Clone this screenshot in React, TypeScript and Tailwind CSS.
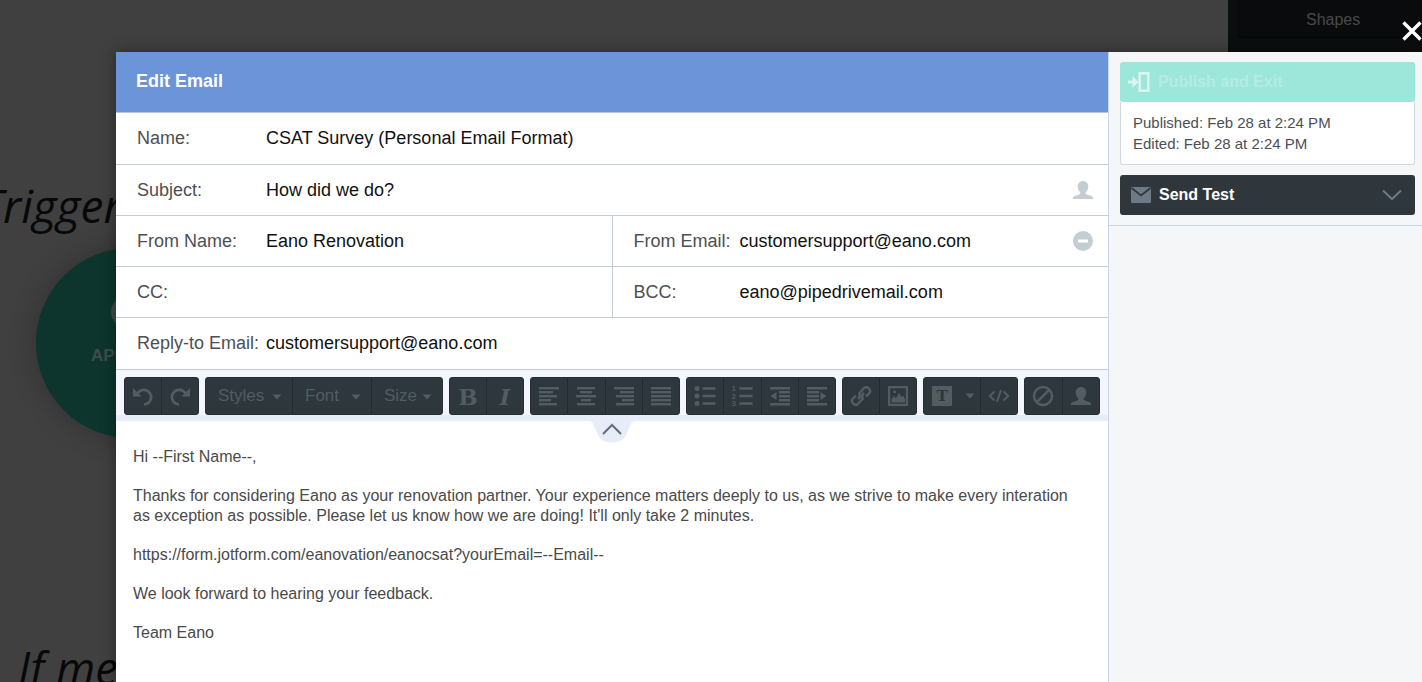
import type { ReactNode } from "react";

const lines = (rows: [number, number][]) =>
  rows.map(([x, w], i) => <rect key={i} x={x} y={2 + i * 4} width={w} height="2.4" />);

function Icon({ children, className = "size-[22px]" }: { children: ReactNode; className?: string }) {
  return (
    <svg viewBox="0 0 22 22" fill="currentColor" aria-hidden="true" className={className}>
      {children}
    </svg>
  );
}

const UndoShape = (
  <>
    <path d="M5.500 8.500A7.300 7.300 0 1 1 12 19.500" fill="none" stroke="currentColor" strokeWidth="2.600" />
    <path d="M1 3v8.500h8.500z" />
  </>
);

const PersonShape = (
  <path d="M11 2c-3.200 0-5.300 2.300-5.300 5.600 0 2.600 1.200 4.500 2.600 5.700.5 1.300-.2 1.900-1.800 2.400C3.600 16.600.8 17 .6 20h20.800c-.2-3-3-3.400-5.900-4.300-1.600-.5-2.300-1.100-1.800-2.400 1.400-1.200 2.600-3.100 2.600-5.700C16.300 4.300 14.200 2 11 2z" />
);

function Tool({ label, children }: { label: string; children: ReactNode }) {
  return (
    <button type="button" aria-label={label} className="flex h-full flex-1 items-center justify-center">
      {children}
    </button>
  );
}

function Group({ className, children }: { className: string; children: ReactNode }) {
  return (
    <div
      className={`flex h-[38px] shrink-0 divide-x divide-[#222b30] overflow-hidden rounded-[3px] border border-[#252e33] bg-[#2d373c] text-[#535c60] ${className}`}
    >
      {children}
    </div>
  );
}

function Caret() {
  return (
    <svg viewBox="0 0 10 6" className="h-[6px] w-[10px]" fill="currentColor" aria-hidden="true">
      <path d="M.5.500h9L5 5.500z" />
    </svg>
  );
}

function Picker({ label, className }: { label: string; className: string }) {
  return (
    <div className={`relative ${className}`}>
      <select aria-label={label} className="h-full w-full appearance-none bg-transparent pl-3 text-[17px]">
        <option>{label}</option>
      </select>
      <span className="pointer-events-none absolute inset-y-0 right-[10px] flex items-center pt-[2px]">
        <Caret />
      </span>
    </div>
  );
}

function Field({
  id,
  label,
  value,
  labelClass,
  children,
}: {
  id: string;
  label: string;
  value: string;
  labelClass: string;
  children?: ReactNode;
}) {
  return (
    <div className="flex min-w-0 flex-1 items-center pr-[14px] text-[18px]">
      <label htmlFor={id} className={`shrink-0 whitespace-nowrap text-[#4c4f54] ${labelClass}`}>
        {label}
      </label>
      <input id={id} defaultValue={value} className="min-w-0 flex-1 bg-transparent text-[#111] outline-none" />
      {children}
    </div>
  );
}

const wide = "w-[150px] pl-[21px]";
const narrow = "w-[127px] pl-[21px]";

function Toolbar() {
  return (
    <div className="relative flex gap-[6px] border-b-[6px] border-[#e6edf9] bg-[#f3f6fd] pl-[8px] pt-[7px]">
      <Group className="w-[75px]">
        <Tool label="Undo"><Icon>{UndoShape}</Icon></Tool>
        <Tool label="Redo"><Icon className="size-[22px] -scale-x-100">{UndoShape}</Icon></Tool>
      </Group>
      <Group className="w-[238px]">
        <Picker label="Styles" className="w-[87px]" />
        <Picker label="Font" className="w-[79px]" />
        <Picker label="Size" className="flex-1" />
      </Group>
      <Group className="w-[75px]">
        <Tool label="Bold">
          <span className="pt-[2px] font-['DejaVu_Serif',serif] text-[23px] font-bold leading-6">B</span>
        </Tool>
        <Tool label="Italic">
          <span className="pt-[2px] font-['DejaVu_Serif',serif] text-[23px] font-bold italic leading-6">I</span>
        </Tool>
      </Group>
      <Group className="w-[150px]">
        <Tool label="Align left"><Icon>{lines([[1, 20], [1, 14], [1, 18], [1, 12], [1, 18]])}</Icon></Tool>
        <Tool label="Align center"><Icon>{lines([[2, 18], [5, 12], [1, 20], [6, 10], [2, 18]])}</Icon></Tool>
        <Tool label="Align right"><Icon>{lines([[1, 20], [7, 14], [3, 18], [9, 12], [3, 18]])}</Icon></Tool>
        <Tool label="Justify"><Icon>{lines([[1, 20], [1, 20], [1, 20], [1, 20], [1, 20]])}</Icon></Tool>
      </Group>
      <Group className="w-[150px]">
        <Tool label="Bulleted list">
          <Icon>
            {[3.5, 11, 18.5].map((y) => (
              <g key={y}>
                <circle cx="3" cy={y} r="2.5" />
                <rect x="8.5" y={y - 1.3} width="13" height="2.6" />
              </g>
            ))}
          </Icon>
        </Tool>
        <Tool label="Numbered list">
          <Icon>
            {[3.5, 11, 18.5].map((y, i) => (
              <g key={y}>
                <text x="0.5" y={y + 2.8} fontSize="8" fontWeight="bold">{i + 1}</text>
                <rect x="8.5" y={y - 1.3} width="13" height="2.6" />
              </g>
            ))}
          </Icon>
        </Tool>
        <Tool label="Decrease indent">
          <Icon>
            <path d="M1 2h20v2.400H1zM10 6h11v2.400H10zM10 10h11v2.400H10zM10 14h11v2.400H10zM1 18h20v2.400H1zM1.500 11 7.500 7v8z" />
          </Icon>
        </Tool>
        <Tool label="Increase indent">
          <Icon>
            <path d="M1 2h20v2.400H1zM1 6h12v2.400H1zM1 10h12v2.400H1zM1 14h12v2.400H1zM1 18h20v2.400H1zM20.500 11l-6-4v8z" />
          </Icon>
        </Tool>
      </Group>
      <Group className="w-[75px]">
        <Tool label="Insert link">
          <Icon>
            <g fill="none" stroke="currentColor" strokeWidth="2.500" strokeLinejoin="round">
              <path d="M9.500 11.500V8L15 2.200h2.300L20 5v2.300l-4 4.200" />
              <path d="M12.500 10.500V14L7 19.800H4.700L2 17v-2.300l4-4.200" />
              <path d="M8 14l6-6" />
            </g>
          </Icon>
        </Tool>
        <Tool label="Insert image">
          <Icon>
            <path fillRule="evenodd" d="M1 1h20v20H1zm2.200 2.200v15.600h15.600V3.200z" />
            <path d="M4.500 17.500v-3L7 11l2 2.500L12 8l2.500 4L16 10.500l2 3.500v3.500z" />
            <circle cx="7.500" cy="6.800" r="1.500" />
          </Icon>
        </Tool>
      </Group>
      <Group className="w-[95px]">
        <button type="button" aria-label="Insert text block" className="flex w-[57px] items-center justify-between pl-[8px] pr-[5px]">
          <span className="flex size-5 items-center justify-center bg-[#535c60] font-['DejaVu_Serif',serif] text-[15px] font-bold leading-5 text-[#2d373c]">
            T
          </span>
          <Caret />
        </button>
        <Tool label="Source code">
          <Icon>
            <path
              d="M6.500 6.500 1.800 11l4.700 4.500M15.500 6.500l4.700 4.500-4.700 4.500M13 5 9 17"
              fill="none"
              stroke="currentColor"
              strokeWidth="2"
            />
          </Icon>
        </Tool>
      </Group>
      <Group className="w-[76px]">
        <Tool label="Clear formatting">
          <Icon>
            <g fill="none" stroke="currentColor" strokeWidth="2.500">
              <circle cx="11" cy="11" r="9" />
              <path d="M5 17 17 5" />
            </g>
          </Icon>
        </Tool>
        <Tool label="Insert contact field"><Icon>{PersonShape}</Icon></Tool>
      </Group>
      <button type="button" aria-label="Collapse header" className="absolute left-1/2 top-full mt-[6px] -translate-x-1/2">
        <svg viewBox="0 0 46 22" className="h-[22px] w-[46px]" aria-hidden="true">
          <path d="M0 0h46c-5 1-5 5-7.500 11C35.500 18.500 31 21.500 23 21.500S10.500 18.500 7.500 11C5 5 5 1 0 0z" fill="#e6edf9" />
          <path d="m14 13 9-9 9 9" fill="none" stroke="#5f6f79" strokeWidth="2" />
        </svg>
      </button>
    </div>
  );
}

function Backdrop() {
  return (
    <div className="absolute inset-0 overflow-hidden" aria-hidden="true">
      <span className="absolute -left-[20px] top-[177px] font-['Open_Sans',sans-serif] text-[46px] italic leading-[56px] text-[#080808]">
        Trigger
      </span>
      <div className="absolute left-[36px] top-[248px] size-[190px] rounded-full bg-[#0d352d] shadow-[0_0_24px_4px_rgba(0,0,0,0.2)]">
        <span className="absolute left-[75px] top-[48px] size-[32px] rounded-full bg-[#3d4d49]" />
        <span className="absolute left-[55px] top-[98px] text-[17px] font-bold leading-5 text-[#3d4d49]">API</span>
      </div>
      <span className="absolute left-[18px] top-[640px] font-['Open_Sans',sans-serif] text-[45px] italic leading-[56px] text-[#080808]">
        If me
      </span>
      <div className="absolute right-0 top-0 h-[52px] w-[194px] bg-[#0b0e0f] pl-[10px]">
        <div className="h-[38px] rounded-bl-[3px] border-b border-l border-[#050606] bg-[#0a0b0d] pl-[67px] pt-[10px] text-[16px] leading-5 text-[#484a4b]">
          Shapes
        </div>
      </div>
    </div>
  );
}

export default function App() {
  return (
    <div className="relative flex min-h-screen flex-col overflow-hidden bg-[#404040] font-['Liberation_Sans',Arial,sans-serif]">
      <Backdrop />
      <button type="button" aria-label="Close" className="absolute -right-[1px] top-[20px] z-10">
        <svg viewBox="0 0 22 22" className="size-[22px]" aria-hidden="true">
          <path d="M2.500 2.500l17 17M19.500 2.500l-17 17" stroke="#fff" strokeWidth="3.400" />
        </svg>
      </button>

      <div
        role="dialog"
        aria-labelledby="dialog-title"
        className="relative ml-[116px] mt-[52px] flex flex-1 bg-white shadow-[0_0_14px_rgba(0,0,0,0.4)]"
      >
        <main className="flex min-w-0 flex-1 flex-col">
          <header className="flex h-[61px] items-center border-b border-[#b8c7d3] bg-[#6c94d9] pb-[2px] pl-[20px]">
            <h1 id="dialog-title" className="text-[18px] font-bold text-white">Edit Email</h1>
          </header>

          <form className="text-black">
            <div className="flex h-[52px] border-b border-[#c3ced3]">
              <Field id="name" label="Name:" value="CSAT Survey (Personal Email Format)" labelClass={wide} />
            </div>
            <div className="flex h-[51px] border-b border-[#c3ced3]">
              <Field id="subject" label="Subject:" value="How did we do?" labelClass={wide}>
                <button type="button" aria-label="Insert contact field" className="text-[#c3ced3]">
                  <Icon>{PersonShape}</Icon>
                </button>
              </Field>
            </div>
            <div className="flex h-[51px] divide-x divide-[#c3ced3] border-b border-[#c3ced3]">
              <Field id="from-name" label="From Name:" value="Eano Renovation" labelClass={wide} />
              <Field id="from-email" label="From Email:" value="customersupport@eano.com" labelClass={narrow}>
                <button type="button" aria-label="Remove sender" className="text-[#c3ced3]">
                  <Icon>
                    <path fillRule="evenodd" d="M11 1a10 10 0 1 0 0 20 10 10 0 0 0 0-20zM6 9.500h10v3H6z" />
                  </Icon>
                </button>
              </Field>
            </div>
            <div className="flex h-[51px] divide-x divide-[#c3ced3] border-b border-[#c3ced3]">
              <Field id="cc" label="CC:" value="" labelClass={wide} />
              <Field id="bcc" label="BCC:" value="eano@pipedrivemail.com" labelClass={narrow} />
            </div>
            <div className="flex h-[52px] border-b border-[#c3ced3]">
              <Field id="reply-to" label="Reply-to Email:" value="customersupport@eano.com" labelClass={wide} />
            </div>
          </form>

          <Toolbar />

          <article className="flex flex-col gap-[19px] pl-[17px] pr-5 pt-[26px] text-[16px] leading-5 text-[#4a4a4a]">
            <p>Hi --First Name--,</p>
            <p>
              Thanks for considering Eano as your renovation partner. Your experience matters deeply to us, as we
              strive to make every interation as exception as possible. Please let us know how we are doing! It'll only
              take 2 minutes.
            </p>
            <p>https://form.jotform.com/eanovation/eanocsat?yourEmail=--Email--</p>
            <p>We look forward to hearing your feedback.</p>
            <p>Team Eano</p>
          </article>
        </main>

        <aside className="w-[314px] shrink-0 border-l border-[#c9d6e2] bg-[#f4f6f8]">
          <div className="flex flex-col gap-[10px] border-b border-[#ced6dd] pb-[10px] pl-[11px] pr-[7px] pt-[10px]">
            <section>
              <button
                type="button"
                className="flex h-[40px] w-full items-center gap-2 rounded-[3px] bg-[#9ce7d9] pl-2 text-[16px] font-bold text-[#b5ece2]"
              >
                <svg viewBox="0 0 22 22" className="size-[22px] text-[#dcf6f1]" aria-hidden="true">
                  <path d="M11.700 2.200h8.600v17.600h-8.600z" fill="none" stroke="currentColor" strokeWidth="2.400" />
                  <path d="M0 9.500h4.500V5.300L10.500 11l-6 5.700v-4.200H0z" fill="currentColor" />
                </svg>
                Publish and Exit
              </button>
              <div className="rounded-b-[3px] border border-t-0 border-[#ced9e4] bg-white px-3 pb-[10px] pt-[10px] text-[15px] leading-[21px] text-[#4c4f54]">
                <p>Published: Feb 28 at 2:24 PM</p>
                <p>Edited: Feb 28 at 2:24 PM</p>
              </div>
            </section>
            <button
              type="button"
              className="flex h-[40px] items-center rounded-[3px] bg-[#2f373d] pl-[11px] pr-[13px] text-[16px] font-bold text-white"
            >
              <svg viewBox="0 0 20 16" className="mr-2 h-4 w-5" aria-hidden="true">
                <rect width="20" height="16" rx="1" fill="#6c7a86" />
                <path d="m.5 1 9.500 7.500L19.500 1" fill="none" stroke="#2f373d" strokeWidth="1.600" />
              </svg>
              Send Test
              <svg viewBox="0 0 20 12" className="ml-auto h-3 w-5" aria-hidden="true">
                <path d="m1 1.500 9 8.500 9-8.500" fill="none" stroke="#6c7a86" strokeWidth="2" />
              </svg>
            </button>
          </div>
        </aside>
      </div>
    </div>
  );
}
